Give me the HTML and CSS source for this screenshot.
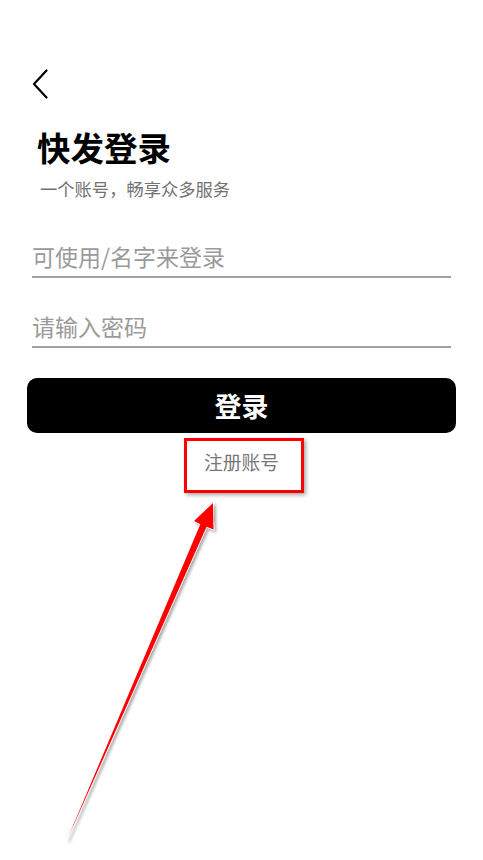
FILE: index.html
```html
<!DOCTYPE html>
<html lang="zh">
<head>
<meta charset="utf-8">
<title>快发登录</title>
<link rel="stylesheet" href="styles.css">
</head>
<body>
<div class="page">
  <div class="topbar">
    <svg class="back" width="18" height="30" viewBox="0 0 18 30"><path d="M14.5 1.5 L2 15 L14.5 28.5" fill="none" stroke="#000" stroke-width="2.2" stroke-linecap="round" stroke-linejoin="round"/></svg>
  </div>
  <h1 class="title">快发登录</h1>
  <p class="subtitle">一个账号，畅享众多服务</p>
  <form class="form">
    <div class="field"><span class="placeholder">可使用/名字来登录</span></div>
    <div class="field"><span class="placeholder">请输入密码</span></div>
    <button type="button" class="login">登录</button>
    <div class="register"><span>注册账号</span></div>
  </form>
</div>
<div class="mark-box"></div>
<svg class="mark-arrow" width="483" height="860" viewBox="0 0 483 860">
  <defs>
    <filter id="sh" x="-20%" y="-20%" width="140%" height="140%">
      <feDropShadow dx="2" dy="2" stdDeviation="1.5" flood-color="#000" flood-opacity="0.35"/>
    </filter>
  </defs>
  <path d="M213 503 L194 521 L200.3 524.2 L67 840 L206.6 526.8 L213.5 529.5 Z" fill="#ff0000" stroke="#fff" stroke-width="1.3" stroke-linejoin="miter" paint-order="stroke" filter="url(#sh)"/>
</svg>
</body>
</html>
```
FILE: styles.css
```css
* { box-sizing: border-box; }
html, body { margin: 0; padding: 0; background: #fff; }
body {
  width: 483px;
  height: 860px;
  position: relative;
  overflow: hidden;
  font-family: "Noto Sans CJK SC", "Noto Sans", sans-serif;
}
.page {
  padding: 0 27px 0 27px;
}
.topbar {
  height: 100px;
  padding-top: 69px;
  padding-left: 5px;
}
.back { display: block; }
.title {
  margin: 25px 0 0 10px;
  font-size: 33.5px;
  font-weight: 700;
  line-height: 44px;
  color: #000;
}
.subtitle {
  margin: 8px 0 0 13px;
  font-size: 17.3px;
  line-height: 24px;
  color: #727272;
}
.form {
  display: flex;
  flex-direction: column;
  margin-top: 32px;
}
.field {
  margin: 0 5px 0 5px;
  height: 45px;
  border-bottom: 2px solid #a0a0a0;
  display: flex;
  align-items: flex-end;
  padding-bottom: 5px;
}
.field + .field { margin-top: 25px; }
.placeholder {
  font-size: 23px;
  line-height: 30px;
  color: #9a9a9a;
}
.login {
  margin-top: 30px;
  height: 55px;
  border: none;
  border-radius: 10px;
  background: #000;
  color: #fff;
  font-family: inherit;
  font-size: 27px;
  font-weight: 700;
  line-height: 55px;
  padding: 0;
}
.register {
  display: flex;
  justify-content: center;
  margin-top: 16px;
}
.register span {
  font-size: 18.8px;
  line-height: 26px;
  color: #777;
}
.mark-box {
  position: absolute;
  left: 184px;
  top: 438px;
  width: 120px;
  height: 55px;
  border: 3px solid #ff0000;
  box-shadow: 2px 2px 4px rgba(0,0,0,0.35);
}
.mark-arrow {
  position: absolute;
  left: 0;
  top: 0;
  pointer-events: none;
}
```
